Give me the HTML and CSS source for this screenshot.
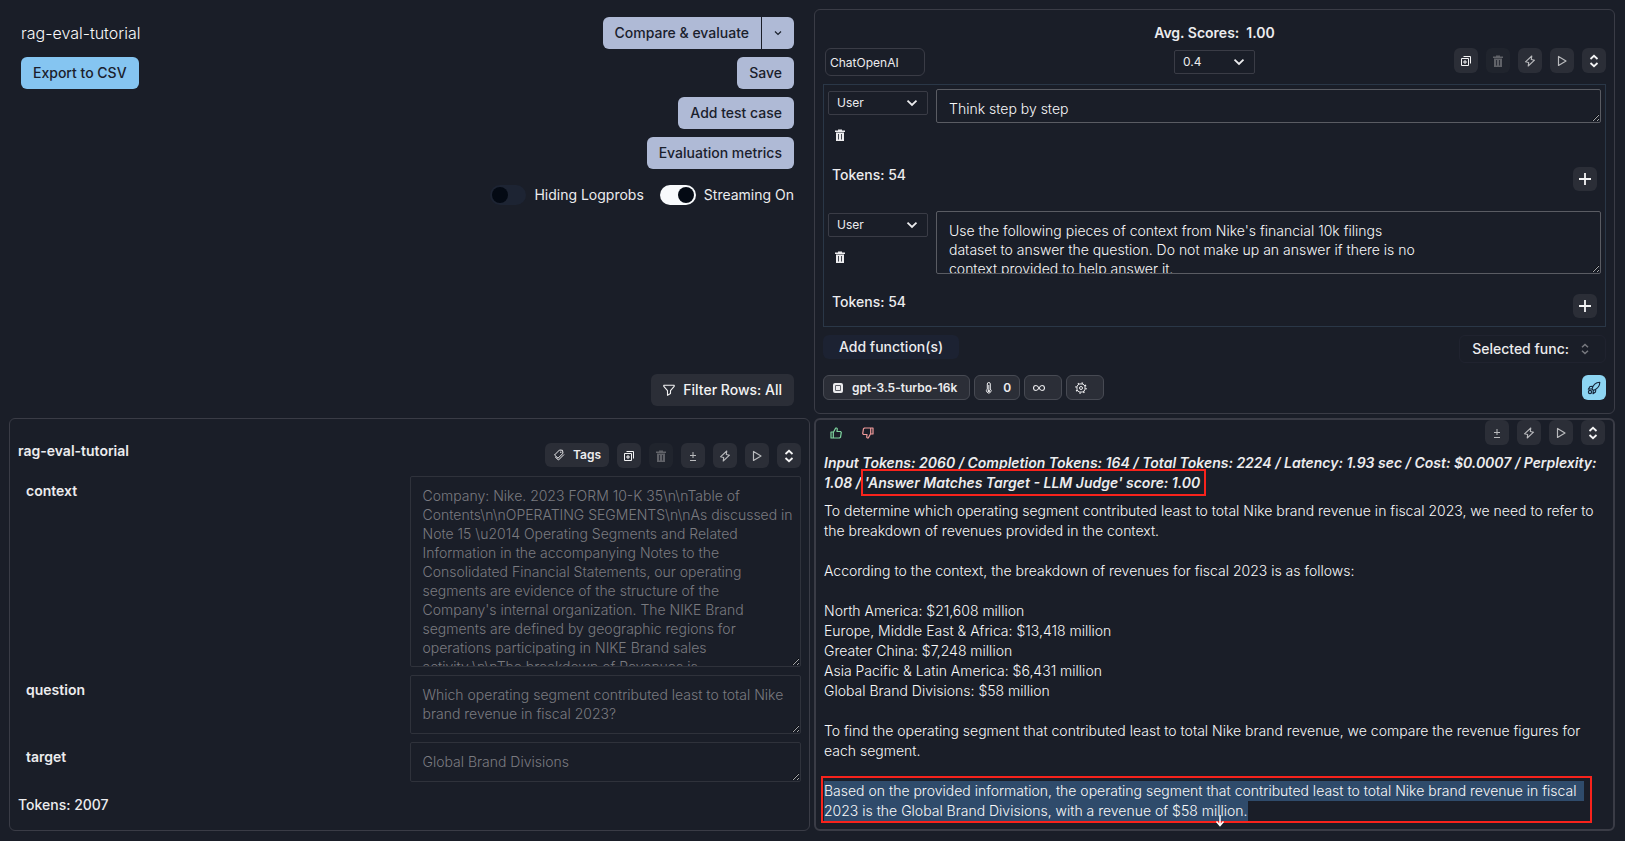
FILE: index.html
```html
<!DOCTYPE html>
<html lang="en">
<head>
<meta charset="utf-8">
<title>rag-eval-tutorial</title>
<link rel="stylesheet" href="styles.css">
</head>
<body>
<svg class="sprite" aria-hidden="true">
  <symbol id="i-down" viewBox="0 0 12 12"><path d="M1.500 3.700L6 8l4.500-4.300" fill="none" stroke="currentColor" stroke-width="1.800"/></symbol>
  <symbol id="i-down-thin" viewBox="0 0 12 12"><path d="M3 4.500l3 3 3-3" fill="none" stroke="currentColor" stroke-width="1.200"/></symbol>
  <symbol id="i-sort" viewBox="0 0 12 14"><path d="M2.500 5L6 1.800 9.500 5M2.500 9L6 12.200 9.500 9" fill="none" stroke="currentColor" stroke-width="1.800"/></symbol>
  <symbol id="i-copy" viewBox="0 0 12 12"><path d="M1.500 3.500h7v7h-7zM3.500 1.500h7v7" fill="none" stroke="currentColor" stroke-width="1" stroke-linejoin="round"/><path d="M3 6.500h1.500V5h1v1.500H7v1H5.500V9h-1V7.500H3z" fill="currentColor"/></symbol>
  <symbol id="i-trash" viewBox="0 0 12 12"><path d="M4 1.500V.5h4v1h3V3H1V1.500z" fill="currentColor"/><path fill-rule="evenodd" d="M2 3.600h8V12H2zM4 5v5.500h.8V5zm3.200 0v5.500H8V5z" fill="currentColor"/></symbol>
  <symbol id="i-bolt" viewBox="0 0 12 12"><path d="M7.800 1L1.500 6.800l3.200.7L4.200 11l6.300-5.800-3.200-.7z" fill="none" stroke="currentColor" stroke-width="1.100" stroke-linejoin="round"/></symbol>
  <symbol id="i-play" viewBox="0 0 12 12"><path d="M2.500 1.500v9L10 6z" fill="none" stroke="currentColor" stroke-width="1.200" stroke-linejoin="round"/></symbol>
  <symbol id="i-pm" viewBox="0 0 12 12"><path d="M3 5.500h6M6 2v6M3 10.500h6" fill="none" stroke="currentColor" stroke-width="1"/></symbol>
  <symbol id="i-plus" viewBox="0 0 12 12"><path d="M0 6h12M6 0v12" fill="none" stroke="currentColor" stroke-width="1.800"/></symbol>
  <symbol id="i-filter" viewBox="0 0 12 12"><path d="M.8 1.300h10.400v1L7.500 6.600v3l-3 1.700V6.600L.8 2.300z" fill="none" stroke="currentColor" stroke-width="1.100" stroke-linejoin="round"/></symbol>
  <symbol id="i-tag" viewBox="0 0 12 12"><path d="M6.500 1l3 .3.500 3L5 9.200 1.500 6zM11 5.500L5.500 11 2.200 8" fill="none" stroke="currentColor" stroke-width="1" stroke-linejoin="round"/><circle cx="7.800" cy="3.300" r=".7" fill="currentColor"/></symbol>
  <symbol id="i-chip" viewBox="0 0 12 12"><path fill-rule="evenodd" d="M3 1h6a2 2 0 012 2v6a2 2 0 01-2 2H3a2 2 0 01-2-2V3a2 2 0 012-2zm.3 2.300v5.400h5.400V3.300z" fill="currentColor"/><path d="M4 4h4v4H4z" fill="currentColor"/></symbol>
  <symbol id="i-temp" viewBox="0 0 12 12"><path d="M4.300 7V2a1.500 1.500 0 013 0v5a2.300 2.300 0 11-3 0z" fill="none" stroke="currentColor"/><path d="M5.800 3v5" stroke="currentColor"/><circle cx="5.800" cy="9" r="1.200" fill="currentColor"/></symbol>
  <symbol id="i-inf" viewBox="0 0 12 12"><path d="M6 6C4.800 4 4 3.500 3 3.500a2.500 2.500 0 000 5C4 8.500 4.800 8 6 6s2-2.500 3-2.500a2.500 2.500 0 010 5C8 8.500 7.200 8 6 6z" fill="none" stroke="currentColor" stroke-width="1.100"/></symbol>
  <symbol id="i-gear" viewBox="0 0 12 12"><circle cx="6" cy="6" r="4.100" fill="none" stroke="currentColor"/><circle cx="6" cy="6" r="1.500" fill="none" stroke="currentColor"/><circle cx="6" cy="6" r="5.100" fill="none" stroke="currentColor" stroke-width="1.300" stroke-dasharray="1.500 2.500"/></symbol>
  <symbol id="i-rocket" viewBox="0 0 14 14"><path d="M5 8C6 4 8.500 1.500 12.800 1.200 12.800 5.500 10 8 6.500 9.500zM5.500 5.300L3 5.500 1.300 8.200l3.700-.4M8.800 8.800L8.500 11 6 12.700 6.300 9.500" fill="none" stroke="currentColor" stroke-width="1.100" stroke-linejoin="round"/><circle cx="3" cy="11" r="1.600" fill="none" stroke="currentColor" stroke-width="1.200"/></symbol>
  <symbol id="i-up-thumb" viewBox="0 0 12 12"><path d="M1 5h2.300v6H1zM3.300 5.500L5.700 1h1l.6.800L7 4.500h3.500l.8.800-.8 5-1 .7H3.300" fill="none" stroke="currentColor" stroke-width="1.200" stroke-linejoin="round"/></symbol>
</svg>

<main class="board">
  <section class="setup">
    <div class="setup-left">
      <h1>rag-eval-tutorial</h1>
      <button class="btn btn-blue" type="button">Export to CSV</button>
    </div>
    <div class="setup-right">
      <div class="split">
        <button class="btn split-main" type="button">Compare &amp; evaluate</button>
        <button class="btn split-more" type="button" aria-label="More options"><svg class="ic"><use href="#i-down-thin"/></svg></button>
      </div>
      <button class="btn" type="button">Save</button>
      <button class="btn" type="button">Add test case</button>
      <button class="btn" type="button">Evaluation metrics</button>
      <div class="switches">
        <label><input type="checkbox" role="switch">Hiding Logprobs</label>
        <label><input type="checkbox" role="switch" checked>Streaming On</label>
      </div>
      <button class="btn btn-dark filter" type="button"><svg class="ic"><use href="#i-filter"/></svg>Filter Rows: All</button>
    </div>
  </section>

  <section class="panel prompt">
    <p class="scores">Avg. Scores:&nbsp; 1.00</p>
    <div class="toolbar">
      <input class="provider" type="text" value="ChatOpenAI" aria-label="Provider">
      <span class="select"><select aria-label="Version"><option>0.4</option></select><svg class="ic"><use href="#i-down"/></svg></span>
      <div class="tools">
        <button class="icon-btn bright" type="button" aria-label="Duplicate"><svg class="ic"><use href="#i-copy"/></svg></button>
        <button class="icon-btn" type="button" aria-label="Delete" disabled><svg class="ic"><use href="#i-trash"/></svg></button>
        <button class="icon-btn" type="button" aria-label="Quick run"><svg class="ic"><use href="#i-bolt"/></svg></button>
        <button class="icon-btn" type="button" aria-label="Run"><svg class="ic"><use href="#i-play"/></svg></button>
        <button class="icon-btn bright" type="button" aria-label="Collapse"><svg class="ic tall"><use href="#i-sort"/></svg></button>
      </div>
    </div>
    <div class="messages">
      <article class="message">
        <div class="message-side">
          <span class="select"><select aria-label="Role"><option>User</option></select><svg class="ic"><use href="#i-down"/></svg></span>
          <button class="plain" type="button" aria-label="Delete message"><svg class="ic"><use href="#i-trash"/></svg></button>
        </div>
        <textarea class="h-one" aria-label="Message">Think step by step</textarea>
      </article>
      <div class="message-foot"><span>Tokens: 54</span><button class="icon-btn square bright" type="button" aria-label="Add message"><svg class="ic"><use href="#i-plus"/></svg></button></div>
      <article class="message">
        <div class="message-side">
          <span class="select"><select aria-label="Role"><option>User</option></select><svg class="ic"><use href="#i-down"/></svg></span>
          <button class="plain" type="button" aria-label="Delete message"><svg class="ic"><use href="#i-trash"/></svg></button>
        </div>
        <textarea class="h-three" aria-label="Message">Use the following pieces of context from Nike's financial 10k filings
dataset to answer the question. Do not make up an answer if there is no
context provided to help answer it.</textarea>
      </article>
      <div class="message-foot"><span>Tokens: 54</span><button class="icon-btn square bright" type="button" aria-label="Add message"><svg class="ic"><use href="#i-plus"/></svg></button></div>
    </div>
    <div class="functions">
      <button class="add-fn" type="button">Add function(s)</button>
      <button class="sel-fn" type="button">Selected func:<svg class="ic"><use href="#i-sort"/></svg></button>
    </div>
    <div class="params">
      <button class="chip model" type="button"><svg class="ic"><use href="#i-chip"/></svg>gpt-3.5-turbo-16k</button>
      <button class="chip" type="button"><svg class="ic"><use href="#i-temp"/></svg>0</button>
      <button class="chip solo" type="button" aria-label="Max tokens"><svg class="ic"><use href="#i-inf"/></svg></button>
      <button class="chip solo" type="button" aria-label="Settings"><svg class="ic"><use href="#i-gear"/></svg></button>
      <button class="icon-btn rocket" type="button" aria-label="Deploy"><svg class="ic"><use href="#i-rocket"/></svg></button>
    </div>
  </section>

  <section class="panel case">
    <header class="case-head">
      <h2>rag-eval-tutorial</h2>
      <div class="tools">
        <button class="icon-btn tags" type="button"><svg class="ic"><use href="#i-tag"/></svg>Tags</button>
        <button class="icon-btn bright" type="button" aria-label="Duplicate"><svg class="ic"><use href="#i-copy"/></svg></button>
        <button class="icon-btn" type="button" aria-label="Delete" disabled><svg class="ic"><use href="#i-trash"/></svg></button>
        <button class="icon-btn" type="button" aria-label="Compare"><svg class="ic"><use href="#i-pm"/></svg></button>
        <button class="icon-btn" type="button" aria-label="Quick run"><svg class="ic"><use href="#i-bolt"/></svg></button>
        <button class="icon-btn" type="button" aria-label="Run"><svg class="ic"><use href="#i-play"/></svg></button>
        <button class="icon-btn bright" type="button" aria-label="Collapse"><svg class="ic tall"><use href="#i-sort"/></svg></button>
      </div>
    </header>
    <div class="field">
      <label for="f-context">context</label>
      <textarea class="h-context" id="f-context" disabled>Company: Nike. 2023 FORM 10-K 35\n\nTable of Contents\n\nOPERATING SEGMENTS\n\nAs discussed in Note 15 \u2014 Operating Segments and Related Information in the accompanying Notes to the Consolidated Financial Statements, our operating segments are evidence of the structure of the Company's internal organization. The NIKE Brand segments are defined by geographic regions for operations participating in NIKE Brand sales activity.\n\nThe breakdown of Revenues is</textarea>
    </div>
    <div class="field">
      <label for="f-question">question</label>
      <textarea class="h-question" id="f-question" disabled>Which operating segment contributed least to total Nike brand revenue in fiscal 2023?</textarea>
    </div>
    <div class="field">
      <label for="f-target">target</label>
      <textarea class="h-target" id="f-target" disabled>Global Brand Divisions</textarea>
    </div>
    <p class="case-tokens">Tokens: 2007</p>
  </section>

  <section class="panel result">
    <header class="result-head">
      <button class="plain good" type="button" aria-label="Good answer"><svg class="ic"><use href="#i-up-thumb"/></svg></button>
      <button class="plain bad" type="button" aria-label="Bad answer"><svg class="ic flipped"><use href="#i-up-thumb"/></svg></button>
      <div class="tools">
        <button class="icon-btn" type="button" aria-label="Compare"><svg class="ic"><use href="#i-pm"/></svg></button>
        <button class="icon-btn" type="button" aria-label="Quick run"><svg class="ic"><use href="#i-bolt"/></svg></button>
        <button class="icon-btn" type="button" aria-label="Run"><svg class="ic"><use href="#i-play"/></svg></button>
        <button class="icon-btn bright" type="button" aria-label="Collapse"><svg class="ic tall"><use href="#i-sort"/></svg></button>
      </div>
    </header>
    <p class="metrics">Input Tokens: 2060 / Completion Tokens: 164 / Total Tokens: 2224 / Latency: 1.93 sec / Cost: $0.0007 / Perplexity: 1.08 / <span class="boxed">'Answer Matches Target - LLM Judge' score: 1.00</span></p>
    <div class="answer">
      <p>To determine which operating segment contributed least to total Nike brand revenue in fiscal 2023, we need to refer to the breakdown of revenues provided in the context.</p>
      <p>According to the context, the breakdown of revenues for fiscal 2023 is as follows:</p>
      <p>North America: $21,608 million<br>Europe, Middle East &amp; Africa: $13,418 million<br>Greater China: $7,248 million<br>Asia Pacific &amp; Latin America: $6,431 million<br>Global Brand Divisions: $58 million</p>
      <p>To find the operating segment that contributed least to total Nike brand revenue, we compare the revenue figures for each segment.</p>
      <p class="framed"><mark>Based on the provided information, the operating segment that contributed least to total Nike brand revenue in fiscal&nbsp;&nbsp;<br>2023 is the Global Brand Divisions, with a revenue of $58 million.</mark><svg class="pointer" viewBox="0 0 10 12"><path d="M5 0v10M1.500 6.500L5 10.500l3.500-4" fill="none" stroke="#fff" stroke-width="1.500"/></svg></p>
    </div>
  </section>
</main>
</body>
</html>
```

FILE: styles.css
```css
:root {
  --bg: #1a1e28;
  --line: #3a3c46;
  --control: #2b2e37;
  --text: #ececee;
  --text-light: #f8f8f9;
}

* { box-sizing: border-box; }

body {
  margin: 0;
  background: var(--bg);
  color: var(--text);
  font: 14px/20px Inter, "Liberation Sans", sans-serif;
}

h1, h2, p { margin: 0; font-weight: 500; }

button, input, select, textarea {
  margin: 0;
  padding: 0;
  border: 0;
  background: none;
  color: inherit;
  font: inherit;
}

.sprite { position: absolute; width: 0; height: 0; }
.ic { display: block; flex: none; width: 12px; height: 12px; }
.ic.tall { height: 14px; }
.ic.flipped { transform: rotate(180deg); }

.board {
  display: grid;
  grid-template-columns: minmax(0, 1fr) minmax(0, 1fr);
  gap: 4px;
  padding: 9px 10px 9px 9px;
}

.panel {
  border: 1px solid var(--line);
  border-radius: 6px;
}

/* Run setup */
.setup {
  display: flex;
  justify-content: space-between;
  padding: 8px 16px 8px 12px;
}
.setup-left, .setup-right {
  display: flex;
  flex-direction: column;
  align-items: flex-start;
  gap: 8px;
}
.setup-right { align-items: flex-end; }
.setup h1 { color: var(--text-light); font-size: 16px; line-height: 32px; font-weight: 300; }

.btn {
  display: flex;
  align-items: center;
  height: 32px;
  padding: 0 12px;
  border-radius: 6px;
  background: #afbad6;
  color: #1a202c;
  font-weight: 500;
}
.btn-blue { background: #85c5f1; }
.btn-dark { gap: 8px; background: var(--control); color: #f2f2f3; }
.split { display: flex; gap: 1px; }
.split-main { border-radius: 6px 0 0 6px; }
.split-more { justify-content: center; width: 32px; padding: 0; border-radius: 0 6px 6px 0; }
.filter { margin-top: auto; }

.switches { display: flex; gap: 16px; margin-top: 8px; }
.switches label { display: flex; align-items: center; gap: 8px; }
.switches input {
  appearance: none;
  display: flex;
  align-items: center;
  width: 36px;
  height: 20px;
  padding: 2px;
  border-radius: 10px;
  background: #1d2433;
}
.switches input::before {
  content: "";
  width: 16px;
  height: 16px;
  border-radius: 50%;
  background: #040a14;
}
.switches input:checked { justify-content: flex-end; background: #f8fafc; }

/* Shared controls */
.tools { display: flex; gap: 8px; }
.icon-btn {
  display: flex;
  align-items: center;
  justify-content: center;
  width: 24px;
  height: 25px;
  border-radius: 6px;
  background: var(--control);
  color: #b9babd;
}
.icon-btn.bright { color: #f4f4f5; }
.icon-btn.square { height: 24px; }
.icon-btn:disabled { background: #20242d; color: #606268; }
.icon-btn.tags {
  gap: 8px;
  width: auto;
  height: 24px;
  padding: 0 8px;
  color: var(--text);
  font-size: 12px;
  font-weight: 600;
}
.plain { display: flex; align-items: center; justify-content: center; width: 24px; height: 20px; }

.select { position: relative; display: block; }
.select select {
  appearance: none;
  display: block;
  width: 100%;
  height: 24px;
  padding: 0 8px;
  border: 1px solid var(--line);
  border-radius: 2px;
  font-size: 12px;
}
.select .ic { position: absolute; top: 6px; right: 10px; pointer-events: none; }

textarea {
  display: block;
  width: 100%;
  padding: 9px 6px 9px 12px;
  border: 1px solid #5a5c63;
  border-radius: 2px;
  color: var(--text-light);
  line-height: 19px;
  font-weight: 300;
  overflow: hidden;
  resize: vertical;
}
textarea:disabled { border-color: #2f323b; color: #7a7b80; }
.h-one { height: 34px; }
.h-three { height: 63px; }
.h-context { height: 191px; }
.h-question { height: 59px; }
.h-target { height: 40px; }

/* Prompt */
.prompt { padding: 13px 8px; }
.scores { text-align: center; font-weight: 600; }
.toolbar {
  display: grid;
  grid-template-columns: 1fr 81px 1fr;
  margin-top: 5px;
}
.toolbar .tools { justify-content: flex-end; }
.toolbar .select { align-self: center; }
.provider {
  width: 100px;
  height: 28px;
  margin-left: 2px;
  padding: 0 4px;
  border: 1px solid var(--line);
  border-radius: 6px;
  font-size: 12px;
}
.messages {
  margin-top: 8px;
  padding: 4px 4px 8px;
  border: 1px solid #2a3747;
}
.message { display: grid; grid-template-columns: 100px 1fr; gap: 8px; }
.message-side {
  display: flex;
  flex-direction: column;
  gap: 10px;
  min-height: 58px;
  padding-top: 2px;
}
.message-foot {
  display: flex;
  align-items: flex-start;
  justify-content: space-between;
  margin-top: 20px;
  padding: 0 4px;
  line-height: 16px;
  font-weight: 500;
}
.message-foot + .message { margin-top: 20px; }

.functions { display: flex; align-items: flex-start; justify-content: space-between; margin-top: 8px; }
.add-fn {
  height: 24px;
  padding: 0 16px;
  border-radius: 6px;
  background: #1c2232;
  font-weight: 500;
}
.sel-fn {
  display: flex;
  align-items: center;
  gap: 10px;
  height: 28px;
  padding: 0 14px 0 12px;
  border: 1px solid #20232f;
  border-radius: 6px;
  font-weight: 500;
}
.sel-fn .ic { color: #77797f; }

.params { display: flex; gap: 4px; margin-top: 12px; }
.chip {
  display: flex;
  align-items: center;
  gap: 8px;
  height: 25px;
  padding: 0 8px;
  border: 1px solid #474a53;
  border-radius: 6px;
  background: var(--control);
  font-size: 12px;
  font-weight: 600;
}
.chip.model { padding-right: 12px; }
.chip.solo { width: 38px; }
.rocket { margin-left: auto; background: #8dd5f2; color: #16263a; }
.rocket .ic { width: 14px; height: 14px; }

/* Test case */
.case { padding: 24px 8px 8px; }
.case-head { display: flex; align-items: flex-start; justify-content: space-between; }
.case-head h2 { font-size: 14px; line-height: 16px; font-weight: 600; }
.field { display: grid; grid-template-columns: 1fr 1fr; margin-top: 8px; }
.field label { padding: 7px 8px; line-height: 16px; font-weight: 600; }
.case-tokens { margin-top: 13px; }

/* Result */
.result { padding: 0 8px 8px; border-width: 2px; }
.result-head { display: flex; gap: 8px; }
.result-head .tools { margin-left: auto; }
.result-head .plain { height: 25px; }
.good { color: #7fd6a0; }
.bad { color: #f09a9a; }
.metrics { margin-top: 8px; font-style: italic; font-weight: 600; }
.boxed { position: relative; }
.boxed::after, .framed::before {
  content: "";
  position: absolute;
  border: 2px solid #f8231c;
}
.boxed::after { inset: -5px -6px -5px -4px; }
.answer { display: grid; gap: 20px; margin-top: 8px; color: var(--text-light); }
.answer p { font-weight: 300; }
.framed { position: relative; }
.framed::before { inset: -5px 13px -2px -3px; }
mark { padding: 1px 0 2px; background: #2f4b6b; color: inherit; }
.pointer { position: absolute; left: 50%; bottom: -6px; width: 10px; height: 12px; }
```
